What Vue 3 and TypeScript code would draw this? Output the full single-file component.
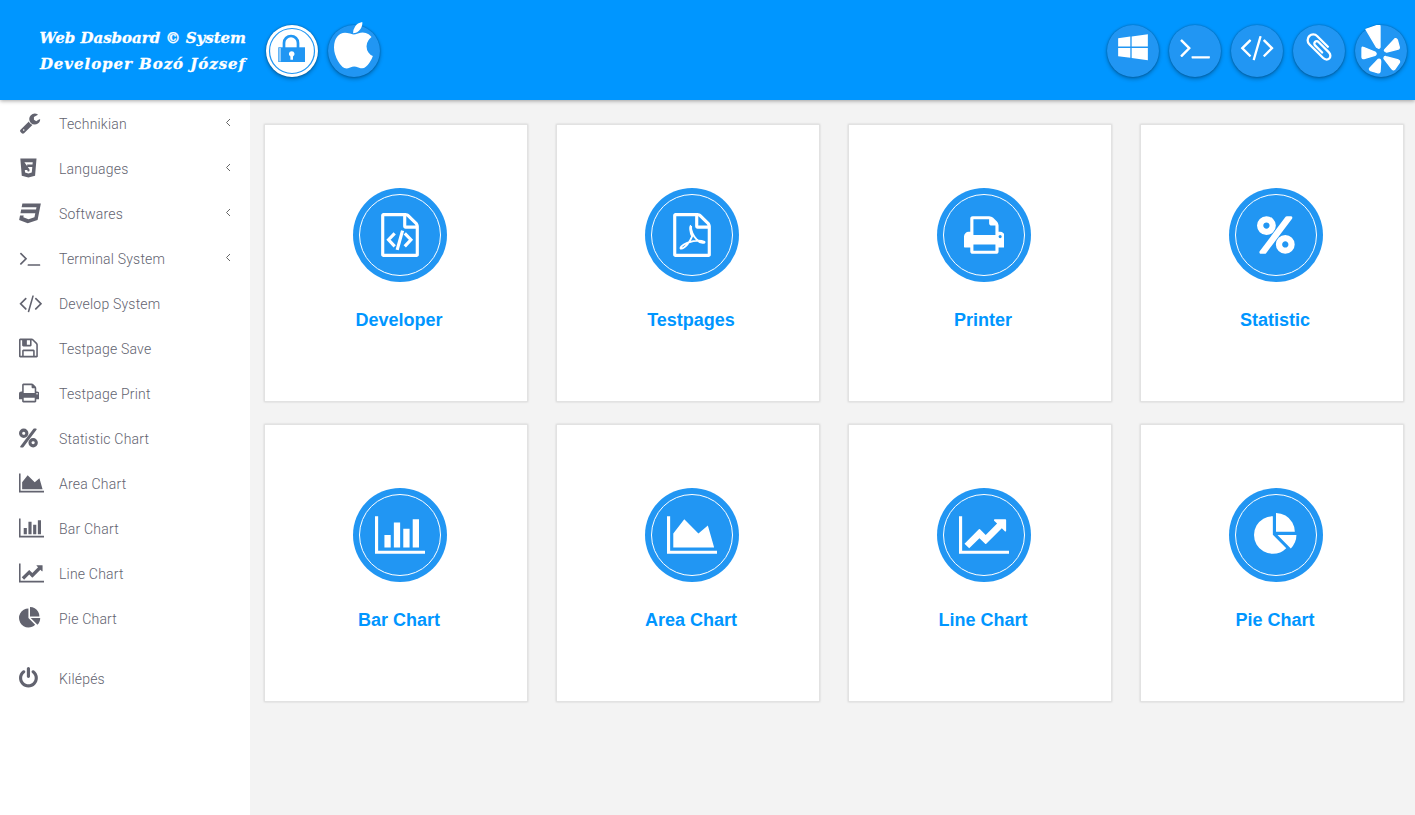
<script setup lang="ts">
interface Glyph {
  w: number
  d: string
  stroke?: string
}

const fileShell =
  'M1596 380q28 28 48 76t20 88v1152q0 40-28 68t-68 28h-1344q-40 0-68-28t-28-68v-1600q0-40 28-68t68-28h896q40 0 88 20t76 48zm-444-244v376h376q-10-29-22-41l-313-313q-12-12-41-22zm384 1528v-1024h-416q-40 0-68-28t-28-68v-416h-768v1536h1280z'

const glyphs: Record<string, Glyph> = {
  wrench: {
    w: 1792,
    d: 'M448 1472q0-26-19-45t-45-19-45 19-19 45 19 45 45 19 45-19 19-45zm644-420l-682 682q-37 37-90 37-52 0-91-37l-106-108q-38-36-38-90 0-53 38-91l681-681q39 98 114.5 173.5t173.5 114.5zm634-435q0 39-23 106-47 134-164.5 217.5t-258.5 83.5q-185 0-316.5-131.5t-131.5-316.5 131.5-316.5 316.5-131.5q58 0 121.5 16.5t107.5 46.5q16 11 16 28t-16 28l-293 169v224l193 106q5-3 79-48.5t135.5-81 70.5-35.5q15 0 23.5 10t8.5 25z',
  },
  html5: {
    w: 1536,
    d: 'M108 128H1428L1310 1520 768 1664 226 1520ZM420 420H440L860 1020 850 1160 768 1180 690 1160 680 1060H475L495 1270 768 1345 1040 1270 1085 820H680L660 620H1100L1120 420Z',
  },
  css3: {
    w: 1792,
    d: 'M275 128h1505l-266 1333-804 267-698-267 71-356h297l-29 147 422 161 486-161 68-339h-1208l58-297h1209l38-191h-1208z',
  },
  terminal: {
    w: 1792,
    d: 'M649 983l-466 466q-10 10-23 10t-23-10l-50-50q-10-10-10-23t10-23l393-393-393-393q-10-10-10-23t10-23l50-50q10-10 23-10t23 10l466 466q10 10 10 23t-10 23zm1079 457v64q0 14-9 23t-23 9h-960q-14 0-23-9t-9-23v-64q0-14 9-23t23-9h960q14 0 23 9t9 23z',
  },
  code: {
    w: 1920,
    d: 'M617 1399l-50 50q-10 10-23 10t-23-10l-466-466q-10-10-10-23t10-23l466-466q10-10 23-10t23 10l50 50q10 10 10 23t-10 23l-393 393 393 393q10 10 10 23t-10 23zm591-1067l-373 1291q-4 13-15.500 19.500t-23.500 2.500l-62-17q-13-4-19.500-15.500t-2.500-24.500l373-1291q4-13 15.500-19.500t23.500-2.500l62 17q13 4 19.500 15.500t2.500 24.500zm657 651l-466 466q-10 10-23 10t-23-10l-50-50q-10-10-10-23t10-23l393-393-393-393q-10-10-10-23t10-23l50-50q10-10 23-10t23 10l466 466q10 10 10 23t-10 23z',
  },
  save: {
    w: 1536,
    d: 'M384 1536h768v-384h-768v384zm896 0h128v-896q0-14-10-38.500t-20-34.500l-281-281q-10-10-34-20t-39-10v416q0 40-28 68t-68 28h-576q-40 0-68-28t-28-68v-416h-128v1280h128v-416q0-40 28-68t68-28h832q40 0 68 28t28 68v416zm-384-928v-320q0-13-9.500-22.500t-22.500-9.500h-192q-13 0-22.500 9.500t-9.500 22.500v320q0 13 9.500 22.500t22.500 9.500h192q13 0 22.500-9.500t9.500-22.500zm640 32v928q0 40-28 68t-68 28h-1344q-40 0-68-28t-28-68v-1344q0-40 28-68t68-28h928q40 0 88 20t76 48l280 280q28 28 48 76t20 88z',
  },
  print: {
    w: 1664,
    d: 'M384 1536h896v-256h-896v256zm0-640h896v-384h-160q-40 0-68-28t-28-68v-160h-640v640zm1152 64q0-26-19-45t-45-19-45 19-19 45 19 45 45 19 45-19 19-45zm128 0v416q0 13-9.500 22.500t-22.500 9.500h-224v160q0 40-28 68t-68 28h-960q-40 0-68-28t-28-68v-160h-224q-13 0-22.500-9.500t-9.500-22.500v-416q0-79 56.500-135.500t135.500-56.500h64v-544q0-40 28-68t68-28h672q40 0 88 20t76 48l152 152q28 28 48 76t20 88v256h64q79 0 135.500 56.500t56.500 135.500z',
  },
  percent: {
    w: 1536,
    d: 'M1280 1280q0-52-38-90t-90-38-90 38-38 90 38 90 90 38 90-38 38-90zm-768-768q0-52-38-90t-90-38-90 38-38 90 38 90 90 38 90-38 38-90zm1024 768q0 159-112.500 271.500t-271.500 112.500-271.500-112.500-112.500-271.500 112.500-271.500 271.500-112.500 271.500 112.500 112.500 271.500zm-96-1088q0 20-13 38l-1056 1408q-19 26-51 26h-160q-26 0-45-19t-19-45q0-20 13-38l1056-1408q19-26 51-26h160q26 0 45 19t19 45zm-672 320q0 159-112.500 271.500t-271.500 112.500-271.500-112.500-112.500-271.500 112.500-271.500 271.500-112.500 271.500 112.500 112.500 271.500z',
  },
  area: {
    w: 2048,
    d: 'M2048 1536v128h-2048v-1536h128v1408h1920zm-384-1024l256 896h-1664v-576l448-576 576 576z',
  },
  bar: {
    w: 2048,
    d: 'M640 896v512h-256v-512h256zm384-512v1024h-256v-1024h256zm1024 1152v128h-2048v-1536h128v1408h1920zm-640-896v768h-256v-768h256zm384-384v1152h-256v-1152h256z',
  },
  line: {
    w: 2048,
    d: 'M2048 1536v128h-2048v-1536h128v1408h1920zm-128-1248v435q0 21-19.500 29.500t-35.500-7.500l-121-121-633 633q-10 10-23 10t-23-10l-233-233-416 416-192-192 585-585q10-10 23-10t23 10l233 233 464-464-121-121q-16-16-7.500-35.500t29.500-19.500h435q14 0 23 9t9 23z',
  },
  pie: {
    w: 1792,
    d: 'M768 890l546 546q-106 108-247.500 168t-298.500 60q-209 0-385.500-103t-279.500-279.500-103-385.500 103-385.500 279.500-279.500 385.500-103v762zm187 6h773q0 157-60 298.500t-168 247.500zm709-128h-768v-768q209 0 385.500 103t279.500 279.500 103 385.500z',
  },
  power: {
    w: 1536,
    d: 'M1536 896q0 156-61 298t-164 245-245 164-298 61-298-61-245-164-164-245-61-298q0-182 80.500-343t226.500-270q43-32 95.500-25t83.500 50q32 42 24.500 94.500t-49.500 84.500q-98 74-151.500 181t-53.500 228q0 104 40.500 198.500t109.500 163.500 163.500 109.500 198.500 40.500 198.500-40.500 163.500-109.500 109.500-163.500 40.500-198.500q0-121-53.500-228t-151.500-181q-42-32-49.500-84.500t24.500-94.500q31-43 84-50t95 25q146 109 226.500 270t80.500 343zm-640-768v640q0 52-38 90t-90 38-90-38-38-90v-640q0-52 38-90t90-38 90 38 38 90z',
  },
  fileCode: {
    w: 1792,
    d: fileShell,
    stroke: 'M680 830L430 1090 680 1360M1090 830L1340 1090 1090 1360M1000 720L780 1500',
  },
  filePdf: {
    w: 1792,
    d: fileShell,
    stroke:
      'M860 520C790 520 820 800 900 950C800 1200 620 1440 450 1450C380 1440 480 1300 700 1220C950 1130 1250 1100 1400 1170C1450 1240 1250 1250 1100 1100C950 950 830 700 860 520',
  },
  apple: {
    w: 1408,
    d: 'M1393 1215q-39 125-123 250-129 196-257 196-49 0-140-32-86-32-151-32-61 0-142 33-81 34-132 34-152 0-301-259-147-261-147-503 0-228 113-374 113-144 284-144 72 0 177 30 104 30 138 30 45 0 143-34 102-34 173-34 119 0 213 65 52 36 104 100-79 67-114 118-65 94-65 207 0 124 69 223t158 126zm-376-1173q0 61-29 136-30 75-93 138-54 54-108 72-37 11-104 17 3-149 78-257 74-107 250-148 1 3 2.500 11t2.500 11q0 4 .5 10t.5 10z',
  },
  windows: {
    w: 1792,
    d: 'M64 408L746 314V872H64ZM821 304L1728 176V872H821ZM64 947H746V1504L64 1410ZM821 947H1728V1642L821 1516Z',
  },
  paperclip: {
    w: 1792,
    d: 'M1596 1385q0 117-79 196t-196 79q-135 0-235-100l-777-776q-113-115-113-271 0-159 110-270t269-111q158 0 273 113l605 606q10 10 10 22 0 16-30.500 46.500t-46.500 30.500q-13 0-23-10l-606-607q-79-77-181-77-106 0-179 75t-73 181q0 105 76 181l776 777q63 63 145 63 64 0 106-42t42-106q0-82-63-145l-581-581q-26-24-60-24-29 0-48 19t-19 48q0 32 25 59l410 410q10 10 10 22 0 16-31 47t-47 31q-12 0-22-10l-410-410q-63-61-63-149 0-82 57-139t139-57q88 0 149 63l581 581q100 98 100 235z',
  },
}

const yelpPath =
  'M828 58L866 45Q870 45 870 50L870 112Q868 118 860 112ZM885 118L915 86Q920 85 922 90L928 112Q928 118 922 118L890 126Q880 124 885 118ZM888 140L925 150Q930 152 928 158L914 178Q910 182 905 176L882 146Q882 138 888 140ZM865 148Q872 146 872 155L870 185Q868 190 862 188L842 182Q836 178 840 174ZM820 112L855 126Q862 132 855 136L822 146Q816 146 816 140L816 116Q816 110 820 112Z'

function box(name: string) {
  return `0 0 ${glyphs[name].w} 1792`
}
function width(name: string, size: number) {
  return (glyphs[name].w / 1792) * size
}

const rightButtons = ['windows', 'terminal', 'code', 'paperclip']

const menu = [
  { label: 'Technikian', icon: 'wrench', sub: true },
  { label: 'Languages', icon: 'html5', sub: true },
  { label: 'Softwares', icon: 'css3', sub: true },
  { label: 'Terminal System', icon: 'terminal', sub: true },
  { label: 'Develop System', icon: 'code', sub: false },
  { label: 'Testpage Save', icon: 'save', sub: false },
  { label: 'Testpage Print', icon: 'print', sub: false },
  { label: 'Statistic Chart', icon: 'percent', sub: false },
  { label: 'Area Chart', icon: 'area', sub: false },
  { label: 'Bar Chart', icon: 'bar', sub: false },
  { label: 'Line Chart', icon: 'line', sub: false },
  { label: 'Pie Chart', icon: 'pie', sub: false },
  { label: 'Kilépés', icon: 'power', sub: false, exit: true },
]

const cards = [
  { label: 'Developer', icon: 'fileCode' },
  { label: 'Testpages', icon: 'filePdf' },
  { label: 'Printer', icon: 'print' },
  { label: 'Statistic', icon: 'percent' },
  { label: 'Bar Chart', icon: 'bar' },
  { label: 'Area Chart', icon: 'area' },
  { label: 'Line Chart', icon: 'line' },
  { label: 'Pie Chart', icon: 'pie' },
]
</script>

<template>
  <div class="page">
    <header class="topbar">
      <div class="brand">
        <div>Web Dasboard © System</div>
        <div class="brand-second">Developer Bozó József</div>
      </div>
      <div class="round-group left-group">
        <button class="round lock" type="button" aria-label="Lock">
          <svg width="52" height="52" viewBox="0 0 52 52">
            <circle cx="26" cy="26" r="22.500" fill="none" stroke="#2196f3" stroke-width="1.200" />
            <path d="M18 23V18a7 7 0 0 1 14 0V23" fill="none" stroke="#2196f3" stroke-width="2.700" />
            <path d="M12.300 22.300H39V37H12.300Z" fill="#2196f3" />
            <path d="M14 23V36.500" fill="none" stroke="#fff" stroke-width="1" />
            <path
              d="M25.700 26.200a2.800 2.800 0 0 1 1.300 5.300V34.700H24.400V31.500A2.800 2.800 0 0 1 25.700 26.200Z"
              fill="#fff"
            />
          </svg>
        </button>
        <button class="round raised" type="button" aria-label="Apple">
          <svg :width="width('apple', 50)" height="50" :viewBox="box('apple')">
            <path :d="glyphs.apple.d" fill="#fff" />
          </svg>
        </button>
      </div>
      <div class="round-group right-group">
        <button v-for="b in rightButtons" :key="b" class="round raised" type="button" :aria-label="b">
          <svg :width="width(b, 32)" height="32" :viewBox="box(b)">
            <path :d="glyphs[b].d" fill="#fff" />
          </svg>
        </button>
        <button class="round" type="button" aria-label="yelp">
          <svg width="52" height="52" viewBox="795 45 156 156">
            <path :d="yelpPath" fill="#fff" stroke="#fff" stroke-width="4" stroke-linejoin="round" />
          </svg>
        </button>
      </div>
    </header>

    <div class="body-row">
      <nav class="sidebar">
        <a v-for="m in menu" :key="m.label" class="menu-item" :class="{ exit: m.exit }" href="#">
          <span class="menu-icon">
            <svg :width="width(m.icon, 22)" height="22" :viewBox="box(m.icon)">
              <path :d="glyphs[m.icon].d" fill="#62636f" />
            </svg>
          </span>
          <span class="menu-label">{{ m.label }}</span>
          <svg v-if="m.sub" class="chevron" width="6" height="9" viewBox="0 0 6 9">
            <path d="M5 1L1.500 4.500 5 8" fill="none" stroke="#666" stroke-width="1" />
          </svg>
        </a>
      </nav>

      <main class="grid">
        <section v-for="c in cards" :key="c.label" class="card">
          <div class="disc">
            <div class="ring">
              <svg :width="width(c.icon, 44)" height="44" :viewBox="box(c.icon)">
                <path :d="glyphs[c.icon].d" fill="#fff" />
                <path
                  v-if="glyphs[c.icon].stroke"
                  :d="glyphs[c.icon].stroke"
                  fill="none"
                  stroke="#fff"
                  :stroke-width="c.icon === 'fileCode' ? 130 : 75"
                />
              </svg>
            </div>
          </div>
          <h2 class="card-title">{{ c.label }}</h2>
        </section>
      </main>
    </div>
  </div>
</template>

<style>
html,
body {
  margin: 0;
  background: #f3f3f3;
}
</style>

<style scoped>
.page {
  height: 815px;
  overflow: hidden;
  display: flex;
  flex-direction: column;
  font-family: Roboto, "Liberation Sans", sans-serif;
}

.topbar {
  position: relative;
  z-index: 2;
  flex: 0 0 100px;
  display: flex;
  align-items: center;
  background: #0096ff;
  box-shadow: 0 1px 4px rgba(0, 0, 0, 0.35);
}

.brand {
  width: 246px;
  text-align: right;
  color: #fff;
  font-family: "DejaVu Serif", serif;
  font-style: italic;
  font-weight: 700;
  font-size: 15px;
  line-height: 26px;
  margin-top: 1px;
  white-space: nowrap;
  -webkit-text-stroke: 0.3px #fff;
}

.brand-second {
  letter-spacing: 0.95px;
}

.round-group {
  display: flex;
  gap: 10px;
}

.left-group {
  margin-left: 20px;
}

.right-group {
  margin-left: auto;
  margin-right: 8px;
}

.round {
  box-sizing: border-box;
  width: 52px;
  height: 52px;
  padding: 0;
  border: 0;
  border-radius: 50%;
  background: #2196f3;
  box-shadow: 0 2px 4px rgba(0, 0, 0, 0.3), 0 0 2px rgba(0, 0, 0, 0.35);
  display: flex;
  align-items: center;
  justify-content: center;
  margin-top: 2px;
  overflow: visible;
}

.raised {
  padding-bottom: 8px;
}

.round svg {
  flex: none;
}

.lock {
  background: #fff;
}

.body-row {
  flex: 1;
  display: flex;
  min-height: 0;
}

.sidebar {
  flex: 0 0 250px;
  background: #fff;
  padding-top: 1px;
}

.menu-item {
  display: flex;
  align-items: center;
  height: 45px;
  padding: 0 19px;
  text-decoration: none;
  color: #62636f;
  font-size: 14px;
  font-weight: 300;
  letter-spacing: 0.2px;
}

.menu-item.exit {
  margin-top: 15px;
}

.menu-icon {
  flex: 0 0 40px;
  display: flex;
  margin-bottom: 2px;
}

.menu-label {
  flex: 1;
}

.chevron {
  margin-bottom: 2px;
}

.grid {
  flex: 1;
  display: grid;
  grid-template-columns: repeat(4, 264px);
  grid-auto-rows: 278px;
  column-gap: 28px;
  row-gap: 22px;
  padding: 24px 0 0 14px;
  align-content: start;
}

.card {
  box-sizing: border-box;
  background: #fff;
  border: 1px solid #e2e2e2;
  box-shadow: 0 0 2px rgba(0, 0, 0, 0.15);
  display: flex;
  flex-direction: column;
  align-items: center;
  padding: 63px 0 0 8px;
}

.disc {
  width: 94px;
  height: 94px;
  border-radius: 50%;
  background: #2196f3;
  display: flex;
  align-items: center;
  justify-content: center;
}

.ring {
  box-sizing: border-box;
  width: 82px;
  height: 82px;
  border-radius: 50%;
  border: 1px solid #fff;
  display: flex;
  align-items: center;
  justify-content: center;
}

.card-title {
  margin: 28px 2px 0 0;
  font-family: "Liberation Sans", Arial, sans-serif;
  font-size: 18px;
  line-height: 21px;
  font-weight: 700;
  color: #0096ff;
}
</style>
